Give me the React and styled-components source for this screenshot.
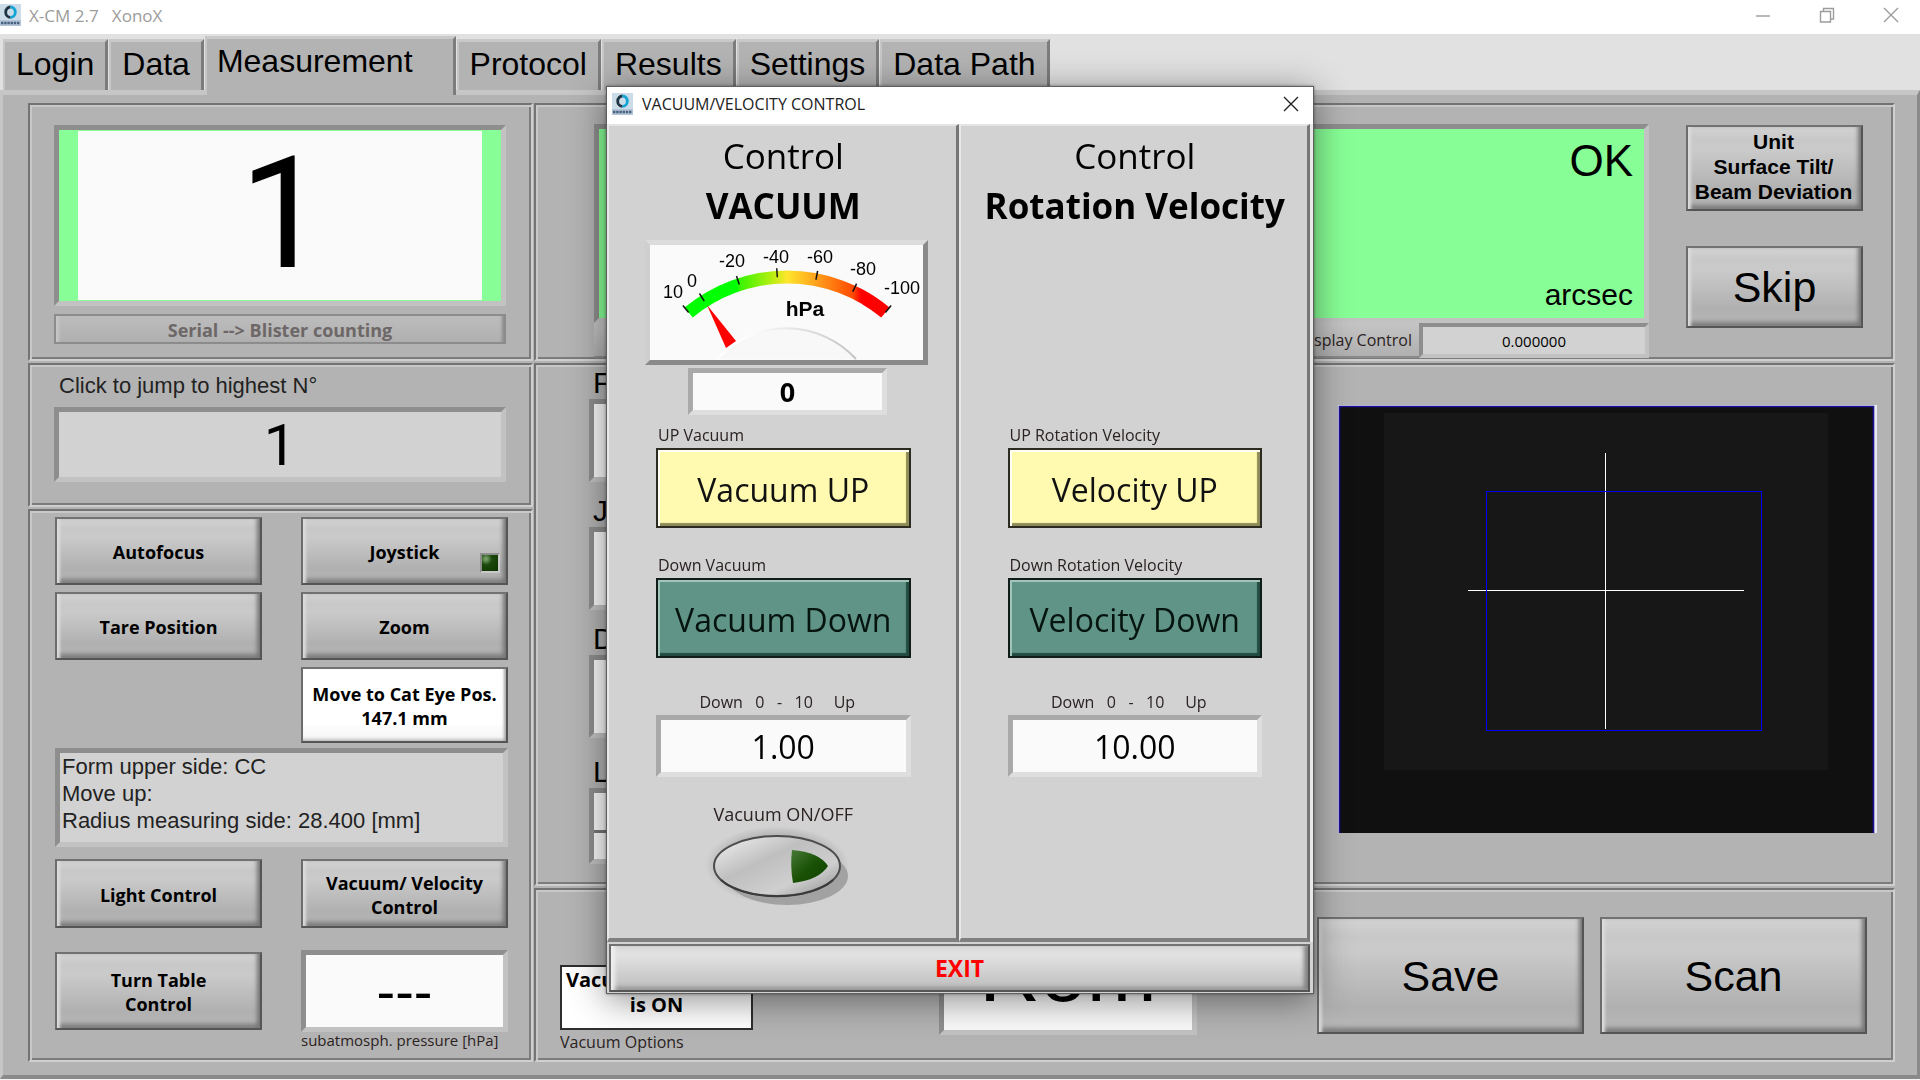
import styled, { createGlobalStyle, css } from "styled-components";

const GlobalStyles = createGlobalStyle`
  :root {
    --face: #b3b3b3;
    --dialog: #d2d2d2;
    --paper: #fafafa;
    --ok: #88ff96;
    --font-ui: "Open Sans", "Noto Sans", sans-serif;
    --font-panel: "Liberation Sans", Arial, sans-serif;
    --font-digit: Roboto, "Liberation Sans", sans-serif;
  }

  * {
    box-sizing: border-box;
    margin: 0;
    padding: 0;
  }

  body {
    background: #fff;
    color: #000;
    font-family: var(--font-ui);
    font-size: 16px;
  }

  button,
  input,
  textarea {
    font: inherit;
    color: inherit;
    outline: none;
  }
`;

const Screen = styled.div`
  min-height: 100vh;
  background: #e1e1e1;
  border-bottom: 1px solid #f4f4f4;
  display: flex;
  flex-direction: column;
`;

/* ---------- Window title bar ---------- */

const TitleBar = styled.header`
  height: 34px;
  padding: 0 7px 4px 0;
  background: #fff;
  display: flex;
  align-items: center;
  gap: 8px;
  color: #9c9c9c;
`;

const AppTitle = styled.h1`
  flex: 1;
  font-size: 17px;
  font-weight: 400;
  white-space: pre;
`;

const WindowButtons = styled.div`
  display: flex;
  gap: 20px;
`;

const WindowButton = styled.button`
  width: 44px;
  height: 26px;
  border: none;
  background: none;
  display: grid;
  place-items: center;
  color: ${(props) => props.$color || "#9c9c9c"};
`;

/* ---------- Tabs ---------- */

const Tabs = styled.nav`
  display: flex;
  align-items: flex-end;
  gap: 1px;
  height: 56px;
  padding-left: 3px;
`;

const Tab = styled.button`
  height: 51px;
  padding: 0 11px 5px 11px;
  background: var(--face);
  border: solid;
  border-width: 3px 3px 0 2px;
  border-color: #c9c9c9 #7c7c7c #c9c9c9 #c6c6c6;
  font-family: var(--font-panel);
  font-size: 32px;
  line-height: 40px;

  ${(props) =>
    props.$active &&
    css`
      height: 59px;
      margin-bottom: -5px;
      padding: 0 40px 12px 10px;
      position: relative;
    `}
`;

/* ---------- Page and etched panels ---------- */

const Page = styled.main`
  flex: 1;
  background: var(--face);
  border: solid;
  border-width: 5px 3px 4px 3px;
  border-color: #c6c6c6 #8a8a8a #8a8a8a #c6c6c6;
  padding: 8px 22px 13px 25px;
  display: grid;
  grid-template-columns: 505fr 1361fr;
  gap: 1px;
`;

const Column = styled.div`
  display: flex;
  flex-direction: column;
  gap: 2px;
  min-width: 0;
`;

const Panel = styled.section`
  border: 2px solid;
  border-color: #747474 #cfcfcf #cfcfcf #747474;
  box-shadow:
    inset 2px 2px 0 #c8c8c8,
    inset -2px -2px 0 #7c7c7c;
`;

const CounterPanel = styled(Panel)`
  padding: 20px 25px 15px 24px;
  display: flex;
  flex-direction: column;
  gap: 8px;
`;

const JumpPanel = styled(Panel)`
  padding: 9px 25px 23px 24px;
  display: flex;
  flex-direction: column;
  gap: 9px;
`;

const ToolsPanel = styled(Panel)`
  flex: 1;
  padding: 6px 23px 6px 25px;
`;

const ResultPanel = styled(Panel)`
  padding: 19px 30px 1px 58px;
  display: flex;
  gap: 37px;
`;

const CameraPanel = styled(Panel)`
  padding: 1px 16px 20px 53px;
  display: flex;
  justify-content: space-between;
  gap: 68px;
`;

const ActionPanel = styled(Panel)`
  flex: 1;
  padding: 0 26px 5px 24px;
  display: flex;
  align-items: flex-end;
`;

/* ---------- Sunken fields ---------- */

const sunken = css`
  border: ${(props) => props.$bevel || 5}px solid;
  border-color: ${(props) =>
    props.$light
      ? "#a9a9a9 #dedede #dedede #a9a9a9"
      : "#8e8e8e #c2c2c2 #c2c2c2 #8e8e8e"};
`;

const Field = styled.input`
  ${sunken}
  display: block;
  width: 100%;
  min-width: 0;
  height: ${(props) => props.$height}px;
  background: ${(props) => props.$bg || "var(--paper)"};
  font-family: ${(props) => props.$font || "var(--font-ui)"};
  font-size: ${(props) => props.$size || 16}px;
  font-weight: ${(props) => (props.$bold ? 700 : 400)};
  text-align: center;
`;

const CounterFrame = styled.div`
  ${sunken}
  height: 181px;
  background: var(--ok);
  padding: 1px 19px;
`;

const CounterValue = styled.input`
  width: 100%;
  height: 100%;
  padding: 0 0 3px 6px;
  border: none;
  background: var(--paper);
  font-family: var(--font-digit);
  font-size: 155px;
  text-align: center;
`;

const InfoBox = styled.textarea`
  ${sunken}
  display: block;
  width: 100%;
  height: 99px;
  margin: 5px 0 12px;
  padding: 0 2px;
  resize: none;
  overflow: hidden;
  background: #d2d2d2;
  color: #222;
  font-family: var(--font-panel);
  font-size: 22px;
  line-height: 27px;
`;

const JumpLabel = styled.label`
  padding-left: 5px;
  color: #222;
  font-family: var(--font-panel);
  font-size: 22px;
  line-height: 24px;
`;

const Caption = styled.label`
  display: block;
  color: #2b2222;
  font-size: ${(props) => props.$size || 16}px;
  line-height: ${(props) => props.$line || 22}px;
  white-space: pre;
`;

/* ---------- Bevelled buttons ---------- */

const BevelButton = styled.button`
  min-width: 0;
  width: 100%;
  height: ${(props) => props.$height}px;
  padding-top: 2px;
  border: 2px solid;
  border-color: #727272 #555 #555 #6c6c6c;
  background: linear-gradient(
    #d3d3d3 0%,
    #c8c8c8 15%,
    #cacaca 28%,
    #b0b0b0 78%,
    #b8b8b8 100%
  );
  box-shadow:
    inset 5px 0 3px -2px #dcdcdc,
    inset -5px 0 4px -2px #757575,
    inset 0 -6px 5px -2px #7a7a7a;
  font-size: 18px;
  font-weight: 700;
  line-height: 24px;
  white-space: pre-line;
  position: relative;

  &:disabled {
    border-color: #8c8c8c;
    box-shadow:
      inset 5px 0 3px -2px #c6c6c6,
      inset -4px 0 3px -2px #8c8c8c;
    background: linear-gradient(#bdbdbd, #b0b0b0);
    color: #6d6767;
  }
`;

const PanelButton = styled(BevelButton)`
  padding: 0 2px 3px 0;
  font-family: var(--font-panel);
  font-size: 21px;
  line-height: 25px;
`;

const LargeButton = styled(BevelButton)`
  padding: 0;
  font-family: var(--font-panel);
  font-size: 43px;
  font-weight: 400;
  line-height: 48px;
`;

const WhiteButton = styled(BevelButton)`
  background: linear-gradient(#fff 75%, #f4f4f4);
  box-shadow:
    inset -4px 0 3px -2px #a5a5a5,
    inset 0 -4px 3px -2px #c2c2c2;
`;

const Led = styled.span`
  position: absolute;
  right: 6px;
  bottom: 10px;
  width: 20px;
  height: 20px;
  border: 2px solid;
  border-color: #8e8e8e #c9c9c9 #c9c9c9 #8e8e8e;
  background: radial-gradient(circle at 25% 25%, #6f9a62 0 8%, #1b4a0c 35%, #0d3300);
`;

/* ---------- Left tools ---------- */

const ToolGrid = styled.div`
  display: grid;
  grid-template-columns: 1fr 1fr;
  column-gap: 39px;
  row-gap: ${(props) => props.$rowGap || 7}px;
  align-items: center;
`;

const SecondColumn = styled.div`
  grid-column: 2;
`;

/* ---------- Result display ---------- */

const Display = styled.div`
  flex: 1;
  min-width: 0;
`;

const DisplayFrame = styled.div`
  ${sunken}
  height: 199px;
  padding: 4px 11px 6px;
  background: var(--ok);
  display: flex;
  flex-direction: column;
  justify-content: space-between;
  align-items: flex-end;
  font-family: var(--font-panel);
`;

const Status = styled.output`
  font-size: 44px;
  line-height: 56px;
`;

const Unit = styled.span`
  font-size: 30px;
  line-height: 34px;
`;

const DisplayFooter = styled.div`
  display: grid;
  grid-template-columns: 1fr 230px;
`;

const DisplayControl = styled.button`
  height: 35px;
  padding-right: 7px;
  border: none;
  border-bottom: 2px solid #8a8a8a;
  background: linear-gradient(#c4c4c4, #b0b0b0);
  text-align: right;
  color: #2b2222;
`;

const ResultButtons = styled.div`
  width: 177px;
  padding-top: 1px;
  display: flex;
  flex-direction: column;
  gap: 35px;
`;

/* ---------- Camera row ---------- */

const FieldList = styled.div`
  flex: 1;
  min-width: 0;
`;

const FieldGroup = styled.div`
  margin-bottom: 12px;

  &:last-child {
    margin: 17px 0 0;
  }
`;

const FieldLabel = styled.label`
  display: block;
  padding-left: 4px;
  font-family: var(--font-panel);
  font-size: 30px;
  line-height: 33px;
`;

const SplitField = styled.div`
  ${sunken}
  background: #777;
  display: grid;
  gap: 3px;
`;

const SplitInput = styled.input`
  width: 100%;
  height: ${(props) => props.$height}px;
  border: none;
  background: var(--paper);
`;

const Camera = styled.svg`
  display: block;
  flex: 0 0 539px;
  min-width: 0;
  height: 429px;
  margin-top: 39px;
`;

/* ---------- Action row ---------- */

const VacuumOption = styled.div`
  width: 193px;
`;

const VacuumStateButton = styled.button`
  width: 100%;
  height: 65px;
  padding: 0 4px 12px;
  border: 2px solid #2e2e2e;
  background: #fff;
  display: grid;
  align-content: center;
  justify-items: center;
  font-size: 20px;
  font-weight: 700;
  line-height: 25px;
`;

const StateName = styled.span`
  justify-self: start;
`;

const ModeDisplay = styled.output`
  ${sunken}
  width: 258px;
  height: 120px;
  margin: 0 0 20px 186px;
  background: var(--paper);
  display: flex;
  align-items: flex-end;
  justify-content: center;
  padding-bottom: 16px;
  font-family: var(--font-panel);
  font-size: 84px;
  line-height: 84px;
`;

const ActionButtons = styled.div`
  display: grid;
  grid-template-columns: 267px 267px;
  gap: 16px;
  margin: 0 0 21px auto;
`;

/* ---------- Dialog ---------- */

const Overlay = styled.div`
  position: fixed;
  inset: 0;
  display: grid;
  place-items: center;
`;

const Dialog = styled.div`
  width: 708px;
  border: 1px solid #5f5f5f;
  background: var(--dialog);
  box-shadow:
    0 6px 34px rgba(0, 0, 0, 0.45),
    0 0 3px rgba(0, 0, 0, 0.4);
`;

const DialogBar = styled.header`
  height: 37px;
  padding: 0 0 4px 5px;
  background: #fff;
  display: flex;
  align-items: center;
  gap: 9px;
`;

const DialogTitle = styled.h2`
  flex: 1;
  color: #222;
  font-size: 16px;
  font-weight: 400;
`;

const DialogBody = styled.div`
  display: grid;
  grid-template-columns: minmax(0, 1fr) minmax(0, 1fr);
  border-right: 3px solid #e9e9e9;
`;

const ControlPane = styled.section`
  height: 818px;
  padding: 5px 45px 0 47px;
  border: solid;
  border-width: 2px 3px 4px 2px;
  border-color: #e4e4e4 #767676 #808080 #e8e8e8;
  display: flex;
  flex-direction: column;
`;

const PaneTitle = styled.h3`
  margin: 0 -40px;
  text-align: center;
  font-size: 35px;
  font-weight: 700;
  line-height: 50px;
  white-space: nowrap;
`;

const PaneKicker = styled.span`
  display: block;
  font-weight: 400;
`;

const MeterArea = styled.div`
  height: 182px;
  margin: 9px -24px 0 -11px;
`;

const MeterFrame = styled.div`
  width: 283px;
  border: 5px solid;
  border-color: #dcdcdc #8a8a8a #8a8a8a #cfcfcf;
  background: var(--paper);
`;

const MeterSvg = styled.svg`
  display: block;
  width: 100%;
  font-family: var(--font-panel);
`;

const MeterValue = styled.div`
  width: 199px;
  margin: 3px 0 0 43px;
`;

const StepGroup = styled.div`
  margin-bottom: 24px;
`;

const StepCaption = styled(Caption)`
  padding-left: 2px;
`;

const StepButton = styled.button`
  width: 100%;
  height: 80px;
  padding-top: 2px;
  border: 2px solid ${(props) => (props.$down ? "#101c18" : "#2c2b22")};
  background: ${(props) => (props.$down ? "#609486" : "#fffab0")};
  box-shadow: ${(props) =>
    props.$down
      ? "inset 2px 2px 0 #a3c4bb, inset -3px -3px 1px #234c41"
      : "inset 2px 2px 0 #fffef0, inset -3px -3px 1px #8f8b58"};
  color: ${(props) => (props.$down ? "#06140f" : "#111")};
  font-size: 32px;
  white-space: nowrap;
`;

const RangeGroup = styled.div`
  margin-top: 7px;
  text-align: center;
`;

const RangeCaption = styled(Caption)`
  padding-right: 12px;
`;

const SwitchGroup = styled.div`
  margin-top: 26px;
  display: flex;
  flex-direction: column;
  align-items: center;
`;

const SwitchButton = styled.button`
  border: none;
  background: none;
`;

const ExitButton = styled(BevelButton)`
  display: block;
  width: calc(100% - 5px);
  margin: 2px 3px 1px 2px;
  padding: 0;
  background: linear-gradient(#d8d8d8, #e2e2e2 20%, #c4c4c4 85%);
  box-shadow:
    inset 6px 0 4px -2px #f0f0f0,
    inset -6px 0 4px -2px #808080,
    inset 0 -5px 4px -2px #8e8e8e;
  color: #f00;
  font-size: 23px;
`;

/* ---------- Drawings ---------- */

function Logo() {
  return (
    <svg width="21" height="22" viewBox="0 0 21 22" aria-hidden="true">
      <rect width="21" height="22" fill="#b4c4d8" />
      <rect width="21" height="16" fill="#cbdbe8" />
      <path d="M10.5 3 A4.8 5.2 0 0 0 10.5 13.4" fill="none" stroke="#1f3442" strokeWidth="2.8" />
      <path d="M10.5 3 A4.8 5.2 0 0 1 10.5 13.4" fill="none" stroke="#10a5d4" strokeWidth="2.8" />
      <path d="M1 19 H20" stroke="#47627e" strokeWidth="2.6" strokeDasharray="2.4 0.8" />
    </svg>
  );
}

function CloseIcon() {
  return (
    <svg width="16" height="16" viewBox="0 0 16 16" aria-hidden="true">
      <path d="M1 1 L15 15 M15 1 L1 15" stroke="currentColor" strokeWidth="1.4" />
    </svg>
  );
}

const METER_CX = 137;
const METER_CY = 186;

const meterTicks = [
  { value: 10, x: 23, y: 47 },
  { value: 0, x: 42, y: 36 },
  { value: -20, x: 82, y: 16 },
  { value: -40, x: 126, y: 12 },
  { value: -60, x: 170, y: 12 },
  { value: -80, x: 213, y: 24 },
  { value: -100, x: 252, y: 43 },
];

function polar(value, radius) {
  const angle = (((10 - value) / 110) * 79.4 - 39.7) * (Math.PI / 180);
  return [METER_CX + radius * Math.sin(angle), METER_CY - radius * Math.cos(angle)];
}

function Meter() {
  const [sx, sy] = polar(10, 154);
  const [ex, ey] = polar(-100, 154);

  return (
    <MeterFrame>
      <MeterSvg viewBox="0 0 273 115" role="img" aria-label="Vacuum in hPa">
        <defs>
          <linearGradient id="scale" gradientUnits="userSpaceOnUse" x1="34" x2="240" y1="0" y2="0">
            <stop offset="0.26" stopColor="#00ff00" />
            <stop offset="0.27" stopColor="#38f400" />
            <stop offset="0.42" stopColor="#b0ef10" />
            <stop offset="0.5" stopColor="#ffe62c" />
            <stop offset="0.65" stopColor="#ff9d1c" />
            <stop offset="0.82" stopColor="#ff4a00" />
            <stop offset="0.86" stopColor="#ff0000" />
          </linearGradient>
          <linearGradient id="hub" x1="0" x2="1" y1="0" y2="0">
            <stop offset="0.2" stopColor="#fff" />
            <stop offset="1" stopColor="#c4c4c4" />
          </linearGradient>
        </defs>
        <path
          d={`M${sx} ${sy} A154 154 0 0 1 ${ex} ${ey}`}
          fill="none"
          stroke="url(#scale)"
          strokeWidth="13"
        />
        <path
          d="M67 114 A94 94 0 0 1 206 114"
          fill="#f8f8f8"
          stroke="url(#hub)"
          strokeWidth="2"
        />
        {meterTicks.map((tick) => {
          const [x1, y1] = polar(tick.value, 154);
          const [x2, y2] = polar(tick.value, 163);
          return (
            <g key={tick.value}>
              <line x1={x1} y1={y1} x2={x2} y2={y2} stroke="#111" strokeWidth="1.5" />
              <text x={tick.x} y={tick.y + 6} textAnchor="middle" fontSize="18">
                {tick.value}
              </text>
            </g>
          );
        })}
        <path d="M57 60 L86 96 L76 103 Z" fill="#f00" />
        <text x="155" y="71" textAnchor="middle" fontSize="21" fontWeight="700">
          hPa
        </text>
      </MeterSvg>
    </MeterFrame>
  );
}

function CameraImage() {
  return (
    <Camera viewBox="0 0 539 429" preserveAspectRatio="none" role="img" aria-label="Camera image">
      <rect width="539" height="428" fill="#e8e8f0" />
      <rect x="1" y="1" width="535" height="427" fill="#101010" />
      <path d="M1.5 428 V1.5 H535.5 V428" fill="none" stroke="#1a0f96" strokeWidth="1.6" />
      <rect x="46" y="8" width="444" height="357" fill="#171717" />
      <path d="M267.5 48 V324 M130 185.5 H406" stroke="#fff" />
      <rect x="148.5" y="86.5" width="275" height="239" fill="none" stroke="#0000f0" />
    </Camera>
  );
}

function SwitchImage() {
  return (
    <svg width="156" height="86" viewBox="0 0 156 86" aria-hidden="true">
      <defs>
        <linearGradient id="knob" x1="0" y1="0" x2="1" y2="1">
          <stop offset="0.1" stopColor="#e6e6e6" />
          <stop offset="0.4" stopColor="#bfbfbf" />
          <stop offset="0.7" stopColor="#cfcfcf" />
          <stop offset="1" stopColor="#8a8a8a" />
        </linearGradient>
        <radialGradient id="glow">
          <stop offset="0.75" stopColor="#b4b4b4" />
          <stop offset="1" stopColor="#d2d2d2" />
        </radialGradient>
        <linearGradient id="lamp" x1="0" y1="0" x2="1" y2="1">
          <stop offset="0" stopColor="#477a38" />
          <stop offset="0.5" stopColor="#1a5206" />
          <stop offset="1" stopColor="#0f4000" />
        </linearGradient>
      </defs>
      <ellipse cx="72" cy="40" rx="72" ry="39" fill="url(#glow)" />
      <ellipse cx="82" cy="51" rx="61" ry="29" fill="#a2a2a2" />
      <ellipse cx="72" cy="41" rx="63" ry="30" fill="url(#knob)" stroke="#4c4c4c" strokeWidth="2" />
      <path d="M16 55 A63 30 0 0 0 128 55" fill="none" stroke="#3a3a3a" strokeWidth="2" />
      <path d="M87 25 Q114 27 123 41 Q114 55 88 58 Q85 41 87 25 Z" fill="url(#lamp)" />
    </svg>
  );
}

/* ---------- Sections ---------- */

const tabs = ["Login", "Data", "Measurement", "Protocol", "Results", "Settings", "Data Path"];

function LeftColumn() {
  return (
    <Column>
      <CounterPanel>
        <CounterFrame>
          <CounterValue aria-label="Counter" defaultValue="1" />
        </CounterFrame>
        <BevelButton $height={30} disabled>
          {"Serial --> Blister counting"}
        </BevelButton>
      </CounterPanel>

      <JumpPanel>
        <JumpLabel htmlFor="jump">Click to jump to highest N°</JumpLabel>
        <Field
          id="jump"
          $height={75}
          $bg="#d2d2d2"
          $font="var(--font-digit)"
          $size={58}
          readOnly
          value="1"
        />
      </JumpPanel>

      <ToolsPanel>
        <ToolGrid>
          <BevelButton $height={68}>Autofocus</BevelButton>
          <BevelButton $height={68}>
            Joystick
            <Led />
          </BevelButton>
          <BevelButton $height={68}>Tare Position</BevelButton>
          <BevelButton $height={68}>Zoom</BevelButton>
          <SecondColumn>
            <WhiteButton $height={76}>{"Move to Cat Eye Pos.\n147.1 mm"}</WhiteButton>
          </SecondColumn>
        </ToolGrid>
        <InfoBox
          aria-label="Sample information"
          readOnly
          value={"Form upper side: CC\nMove up:\nRadius measuring side: 28.400 [mm]"}
        />
        <ToolGrid $rowGap={22}>
          <BevelButton $height={69}>Light Control</BevelButton>
          <BevelButton $height={69}>{"Vacuum/ Velocity\nControl"}</BevelButton>
          <BevelButton $height={78}>{"Turn Table\nControl"}</BevelButton>
          <Field
            id="pressure"
            $height={82}
            $font="var(--font-panel)"
            $size={56}
            readOnly
            value="---"
          />
        </ToolGrid>
        <ToolGrid>
          <SecondColumn>
            <Caption htmlFor="pressure" $size={15} $line={16}>
              subatmosph. pressure [hPa]
            </Caption>
          </SecondColumn>
        </ToolGrid>
      </ToolsPanel>
    </Column>
  );
}

function RightColumn() {
  return (
    <Column>
      <ResultPanel>
        <Display>
          <DisplayFrame>
            <Status>OK</Status>
            <Unit>arcsec</Unit>
          </DisplayFrame>
          <DisplayFooter>
            <DisplayControl>Display Control</DisplayControl>
            <Field
              aria-label="Display value"
              $height={35}
              $bevel={4}
              $size={15}
              $bg="#d2d2d2"
              readOnly
              value="0.000000"
            />
          </DisplayFooter>
        </Display>
        <ResultButtons>
          <PanelButton $height={86}>{"Unit\nSurface Tilt/\nBeam Deviation"}</PanelButton>
          <LargeButton $height={82}>Skip</LargeButton>
        </ResultButtons>
      </ResultPanel>

      <CameraPanel>
        <FieldList>
          {["F", "J", "D"].map((name) => (
            <FieldGroup key={name}>
              <FieldLabel htmlFor={`field-${name}`}>{name}</FieldLabel>
              <Field id={`field-${name}`} $height={83} />
            </FieldGroup>
          ))}
          <FieldGroup>
            <FieldLabel htmlFor="field-L">L</FieldLabel>
            <SplitField>
              <SplitInput id="field-L" $height={37} />
              <SplitInput aria-label="L, second value" $height={26} />
            </SplitField>
          </FieldGroup>
        </FieldList>
        <CameraImage />
      </CameraPanel>

      <ActionPanel>
        <VacuumOption>
          <VacuumStateButton id="vacuum-state">
            <StateName>Vacuum</StateName>
            <span>is ON</span>
          </VacuumStateButton>
          <Caption htmlFor="vacuum-state" $line={25}>
            Vacuum Options
          </Caption>
        </VacuumOption>
        <ModeDisplay>Rom</ModeDisplay>
        <ActionButtons>
          <LargeButton $height={117}>Save</LargeButton>
          <LargeButton $height={117}>Scan</LargeButton>
        </ActionButtons>
      </ActionPanel>
    </Column>
  );
}

function Controls({ name, prefix, value }) {
  return (
    <>
      <StepGroup>
        <StepCaption htmlFor={`${name}-up`} $line={26}>{`UP ${prefix}`}</StepCaption>
        <StepButton id={`${name}-up`}>{name} UP</StepButton>
      </StepGroup>
      <StepGroup>
        <StepCaption htmlFor={`${name}-down`} $line={26}>{`Down ${prefix}`}</StepCaption>
        <StepButton id={`${name}-down`} $down>
          {name} Down
        </StepButton>
      </StepGroup>
      <RangeGroup>
        <RangeCaption htmlFor={`${name}-step`} $line={26}>
          {"Down   0   -   10     Up"}
        </RangeCaption>
        <Field id={`${name}-step`} $height={62} $size={32} $light defaultValue={value} />
      </RangeGroup>
    </>
  );
}

function VacuumDialog() {
  return (
    <Overlay>
      <Dialog role="dialog" aria-labelledby="dialog-title">
        <DialogBar>
          <Logo />
          <DialogTitle id="dialog-title">VACUUM/VELOCITY CONTROL</DialogTitle>
          <WindowButton $color="#222" aria-label="Close dialog">
            <CloseIcon />
          </WindowButton>
        </DialogBar>
        <DialogBody>
          <ControlPane>
            <PaneTitle>
              <PaneKicker>Control</PaneKicker>
              VACUUM
            </PaneTitle>
            <MeterArea>
              <Meter />
              <MeterValue>
                <Field
                  aria-label="Vacuum value"
                  $height={47}
                  $size={27}
                  $bold
                  $light
                  readOnly
                  value="0"
                />
              </MeterValue>
            </MeterArea>
            <Controls name="Vacuum" prefix="Vacuum" value="1.00" />
            <SwitchGroup>
              <Caption htmlFor="vacuum-switch" $size={18}>
                Vacuum ON/OFF
              </Caption>
              <SwitchButton id="vacuum-switch" role="switch" aria-checked="false">
                <SwitchImage />
              </SwitchButton>
            </SwitchGroup>
          </ControlPane>
          <ControlPane>
            <PaneTitle>
              <PaneKicker>Control</PaneKicker>
              Rotation Velocity
            </PaneTitle>
            <MeterArea />
            <Controls name="Velocity" prefix="Rotation Velocity" value="10.00" />
          </ControlPane>
        </DialogBody>
        <ExitButton $height={48}>EXIT</ExitButton>
      </Dialog>
    </Overlay>
  );
}

function App() {
  return (
    <>
      <GlobalStyles />
      <Screen>
        <TitleBar>
          <Logo />
          <AppTitle>{"X-CM 2.7   XonoX"}</AppTitle>
          <WindowButtons>
            <WindowButton aria-label="Minimize">
              <svg width="16" height="16" viewBox="0 0 16 16" aria-hidden="true">
                <path d="M1 9 H15" stroke="currentColor" strokeWidth="1.4" />
              </svg>
            </WindowButton>
            <WindowButton aria-label="Restore">
              <svg width="16" height="16" viewBox="0 0 16 16" fill="none" aria-hidden="true">
                <path
                  d="M1.5 4.5 H11.5 V15 H1.5 Z M4.5 4.5 V1.5 H14.5 V12 H11.5"
                  stroke="currentColor"
                  strokeWidth="1.4"
                />
              </svg>
            </WindowButton>
            <WindowButton aria-label="Close">
              <CloseIcon />
            </WindowButton>
          </WindowButtons>
        </TitleBar>
        <Tabs role="tablist">
          {tabs.map((tab) => (
            <Tab
              key={tab}
              role="tab"
              aria-selected={tab === "Measurement"}
              $active={tab === "Measurement"}
            >
              {tab}
            </Tab>
          ))}
        </Tabs>
        <Page>
          <LeftColumn />
          <RightColumn />
        </Page>
      </Screen>
      <VacuumDialog />
    </>
  );
}

export default App;
